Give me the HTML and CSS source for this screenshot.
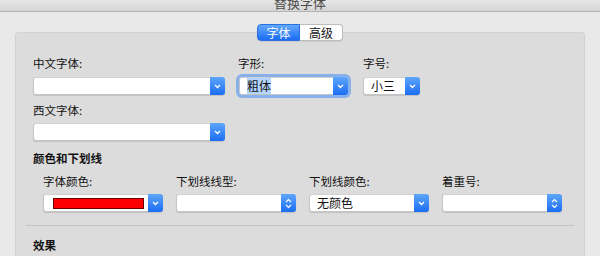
FILE: index.html
```html
<!DOCTYPE html>
<html lang="zh-CN">
<head>
<meta charset="UTF-8">
<title>替换字体</title>
<link rel="stylesheet" href="styles.css">
</head>
<body>
<div class="titlebar"><span>替换字体</span></div>

<div class="tabs">
    <div class="tab active">字体</div>
    <div class="tab">高级</div>
</div>

<div class="panel">
    <div class="row">
        <div class="field field-cn">
            <div class="label">中文字体:</div>
            <div class="select">
                <div class="value"></div>
                <div class="btn"><svg width="7" height="5" viewBox="0 0 7 5"><path d="M1 1l2.5 2.5L6 1" fill="none" stroke="#fff" stroke-width="1.3"/></svg></div>
            </div>
        </div>
        <div class="field field-style">
            <div class="label">字形:</div>
            <div class="select focused">
                <div class="value"><span class="sel">粗体</span></div>
                <div class="btn"><svg width="7" height="5" viewBox="0 0 7 5"><path d="M1 1l2.5 2.5L6 1" fill="none" stroke="#fff" stroke-width="1.3"/></svg></div>
            </div>
        </div>
        <div class="field field-size">
            <div class="label">字号:</div>
            <div class="select">
                <div class="value">小三</div>
                <div class="btn"><svg width="7" height="5" viewBox="0 0 7 5"><path d="M1 1l2.5 2.5L6 1" fill="none" stroke="#fff" stroke-width="1.3"/></svg></div>
            </div>
        </div>
    </div>

    <div class="row row-west">
        <div class="field field-cn">
            <div class="label">西文字体:</div>
            <div class="select">
                <div class="value"></div>
                <div class="btn"><svg width="7" height="5" viewBox="0 0 7 5"><path d="M1 1l2.5 2.5L6 1" fill="none" stroke="#fff" stroke-width="1.3"/></svg></div>
            </div>
        </div>
    </div>

    <div class="heading">颜色和下划线</div>

    <div class="row row-color">
        <div class="field field-col">
            <div class="label">字体颜色:</div>
            <div class="select">
                <div class="value"><span class="swatch"></span></div>
                <div class="btn"><svg width="7" height="5" viewBox="0 0 7 5"><path d="M1 1l2.5 2.5L6 1" fill="none" stroke="#fff" stroke-width="1.3"/></svg></div>
            </div>
        </div>
        <div class="field field-col">
            <div class="label">下划线线型:</div>
            <div class="select">
                <div class="value"></div>
                <div class="btn stepper"><svg width="7" height="11" viewBox="0 0 7 11"><path d="M1 4l2.5-2.5L6 4M1 7l2.5 2.5L6 7" fill="none" stroke="#fff" stroke-width="1.2"/></svg></div>
            </div>
        </div>
        <div class="field field-col">
            <div class="label">下划线颜色:</div>
            <div class="select">
                <div class="value">无颜色</div>
                <div class="btn"><svg width="7" height="5" viewBox="0 0 7 5"><path d="M1 1l2.5 2.5L6 1" fill="none" stroke="#fff" stroke-width="1.3"/></svg></div>
            </div>
        </div>
        <div class="field field-col">
            <div class="label">着重号:</div>
            <div class="select">
                <div class="value"></div>
                <div class="btn stepper"><svg width="7" height="11" viewBox="0 0 7 11"><path d="M1 4l2.5-2.5L6 4M1 7l2.5 2.5L6 7" fill="none" stroke="#fff" stroke-width="1.2"/></svg></div>
            </div>
        </div>
    </div>

    <div class="divider"></div>

    <div class="heading heading-effect">效果</div>
</div>
</body>
</html>
```

FILE: styles.css
```css
body {
    margin: 0;
    width: 600px;
    height: 256px;
    overflow: hidden;
    background-color: #e9e9e9;
    font-family: "Noto Sans CJK SC", "Liberation Sans", sans-serif;
    font-size: 11.5px;
    color: #111;
}

.titlebar {
    height: 11px;
    overflow: hidden;
    text-align: center;
    background: linear-gradient(#e6e6e6, #d5d5d5);
    border-bottom: 1px solid #b3b3b3;
}

.titlebar span {
    display: block;
    margin-top: -5px;
    font-size: 13px;
    line-height: 15px;
    color: #4b4b4b;
}

.tabs {
    position: relative;
    z-index: 1;
    display: flex;
    justify-content: center;
    margin-top: 12px;
}

.tab {
    width: 43px;
    height: 17px;
    box-sizing: border-box;
    line-height: 15px;
    text-align: center;
    font-size: 12px;
    background-color: #fff;
    border: 1px solid #bdbdbd;
    border-left: none;
    border-radius: 0 4px 4px 0;
    box-shadow: 0 1px 1px rgba(0, 0, 0, 0.08);
}

.tab.active {
    color: #fff;
    background: linear-gradient(#62a8fc, #1a6cf2);
    border: 1px solid #2a70e2;
    border-radius: 4px 0 0 4px;
}

.panel {
    height: 200px;
    margin: -9px 15px 0;
    padding: 23px 17px 0;
    background-color: #dcdcdc;
    border: 1px solid #d2d2d2;
    border-bottom: none;
    border-radius: 4px 4px 0 0;
}

.row {
    display: flex;
}

.field-cn {
    width: 192px;
}

.field-style {
    width: 109px;
    margin-left: 14px;
}

.field-size {
    width: 57px;
    margin-left: 15px;
}

.label {
    line-height: 14px;
    margin-bottom: 7px;
}

.field-style .label {
    margin-left: -1px;
}

.row-west {
    margin-top: 8px;
}

.row-west .label {
    margin-bottom: 6px;
}

.heading {
    margin-top: 10px;
    line-height: 14px;
    font-weight: bold;
}

.row-color {
    margin: 9px 0 0 10px;
    gap: 13px;
}

.field-col {
    width: 120px;
}

.row-color .label {
    margin-bottom: 6px;
}

.select {
    display: flex;
    height: 18px;
    box-sizing: border-box;
    background-color: #fff;
    border: 1px solid #c6c6c6;
    border-top-color: #d0d0d0;
    border-radius: 3px;
    box-shadow: 0 1px 1px rgba(0, 0, 0, 0.12);
}

.select.focused {
    box-shadow: 0 0 0 3px #88b0ea;
}

.value {
    flex: 1;
    display: flex;
    align-items: center;
    padding-left: 7px;
    line-height: 16px;
    font-size: 12px;
    white-space: nowrap;
    overflow: hidden;
}

.sel {
    background-color: #b4d5fe;
}

.swatch {
    width: 89px;
    height: 9px;
    margin-left: 2px;
    background-color: #ff0000;
    border: 1px solid #6b0000;
}

.btn {
    width: 15px;
    margin: -1px -1px -1px 0;
    display: flex;
    align-items: center;
    justify-content: center;
    background: linear-gradient(#5ea6fc, #1b6df2);
    border-radius: 0 3px 3px 0;
}

.divider {
    height: 1px;
    margin: 13px -7px 0 -7px;
    background-color: #c2c2c2;
}

.heading-effect {
    margin-top: 12px;
}
```
